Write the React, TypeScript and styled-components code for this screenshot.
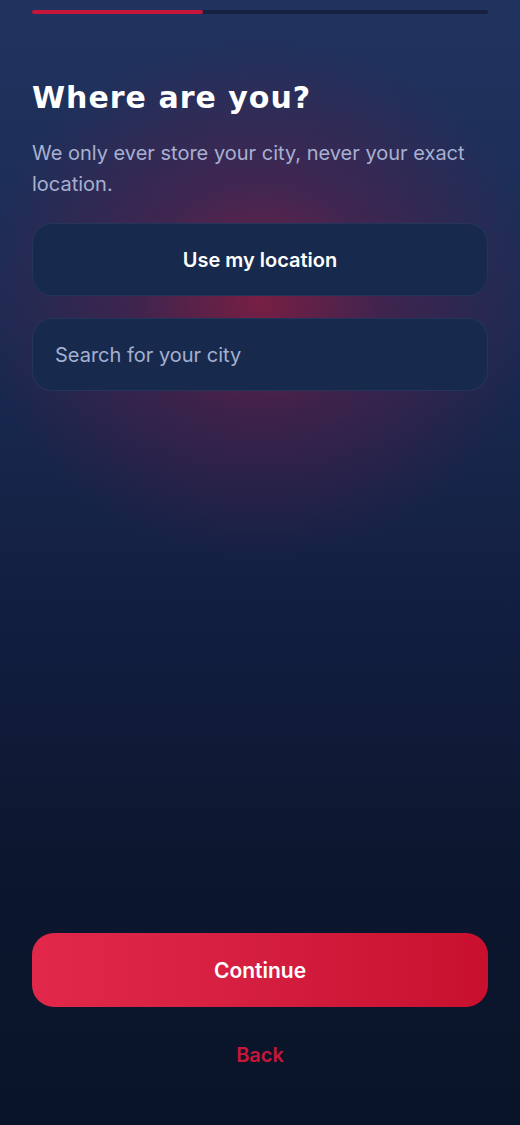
import React from 'react';
import styled, { createGlobalStyle } from 'styled-components';

const GlobalStyle = createGlobalStyle`
  html, body {
    margin: 0;
    padding: 0;
    background: #0a1428;
  }
  * {
    box-sizing: border-box;
  }
`;

const Screen = styled.div`
  width: 520px;
  height: 1125px;
  display: flex;
  flex-direction: column;
  padding: 10px 32px 56px;
  font-family: Inter, 'Noto Sans', sans-serif;
  background:
    radial-gradient(ellipse 280px 260px at 260px 300px, rgba(160, 25, 60, 0.7) 0%, rgba(125, 25, 70, 0.36) 45%, rgba(60, 25, 70, 0) 100%),
    linear-gradient(180deg, #21335f 0%, #1a2a52 30%, #121e40 55%, #0c1730 75%, #0a1428 100%);
`;

const Progress = styled.div`
  height: 4px;
  border-radius: 2px;
  background: #15213f;
  display: flex;
`;

const ProgressFill = styled.div`
  height: 100%;
  border-radius: 2px;
  background: #c8163a;
`;

const Title = styled.h1`
  margin: 66px 0 0;
  font-family: 'DejaVu Sans', Inter, sans-serif;
  font-weight: 700;
  font-size: 30px;
  line-height: 36px;
  letter-spacing: 1px;
  color: #ffffff;
`;

const Subtitle = styled.p`
  margin: 22px 0 0;
  font-size: 20px;
  line-height: 31px;
  color: #a8b0d2;
`;

const Field = styled.div<{ align: 'center' | 'left' }>`
  height: 73px;
  border-radius: 20px;
  background: #172a4d;
  border: 1px solid rgba(120, 140, 190, 0.12);
  display: flex;
  align-items: center;
  justify-content: ${({ align }) => (align === 'center' ? 'center' : 'flex-start')};
  padding: 0 22px;
  font-size: 20px;
`;

const Fields = styled.div`
  display: flex;
  flex-direction: column;
  gap: 22px;
  margin-top: 23px;
`;

const LocationLabel = styled.span`
  color: #ffffff;
  font-weight: 600;
`;

const Placeholder = styled.span`
  color: #a5b0cf;
`;

const Spacer = styled.div`
  flex: 1;
`;

const ContinueButton = styled.div`
  height: 74px;
  border-radius: 22px;
  background: linear-gradient(90deg, #e2284a 0%, #d41e40 50%, #c8102e 100%);
  display: flex;
  align-items: center;
  justify-content: center;
  color: #ffffff;
  font-weight: 600;
  font-size: 21px;
`;

const BackLink = styled.div`
  margin-top: 34px;
  text-align: center;
  color: #c8163a;
  font-weight: 600;
  font-size: 20px;
  line-height: 28px;
`;

export default function App() {
  const step = 3;
  const total = 8;
  return (
    <Screen>
      <GlobalStyle />
      <Progress>
        <ProgressFill style={{ width: `${(step / total) * 100}%` }} />
      </Progress>
      <Title>Where are you?</Title>
      <Subtitle>We only ever store your city, never your exact location.</Subtitle>
      <Fields>
        <Field align="center">
          <LocationLabel>Use my location</LocationLabel>
        </Field>
        <Field align="left">
          <Placeholder>Search for your city</Placeholder>
        </Field>
      </Fields>
      <Spacer />
      <ContinueButton>Continue</ContinueButton>
      <BackLink>Back</BackLink>
    </Screen>
  );
}
